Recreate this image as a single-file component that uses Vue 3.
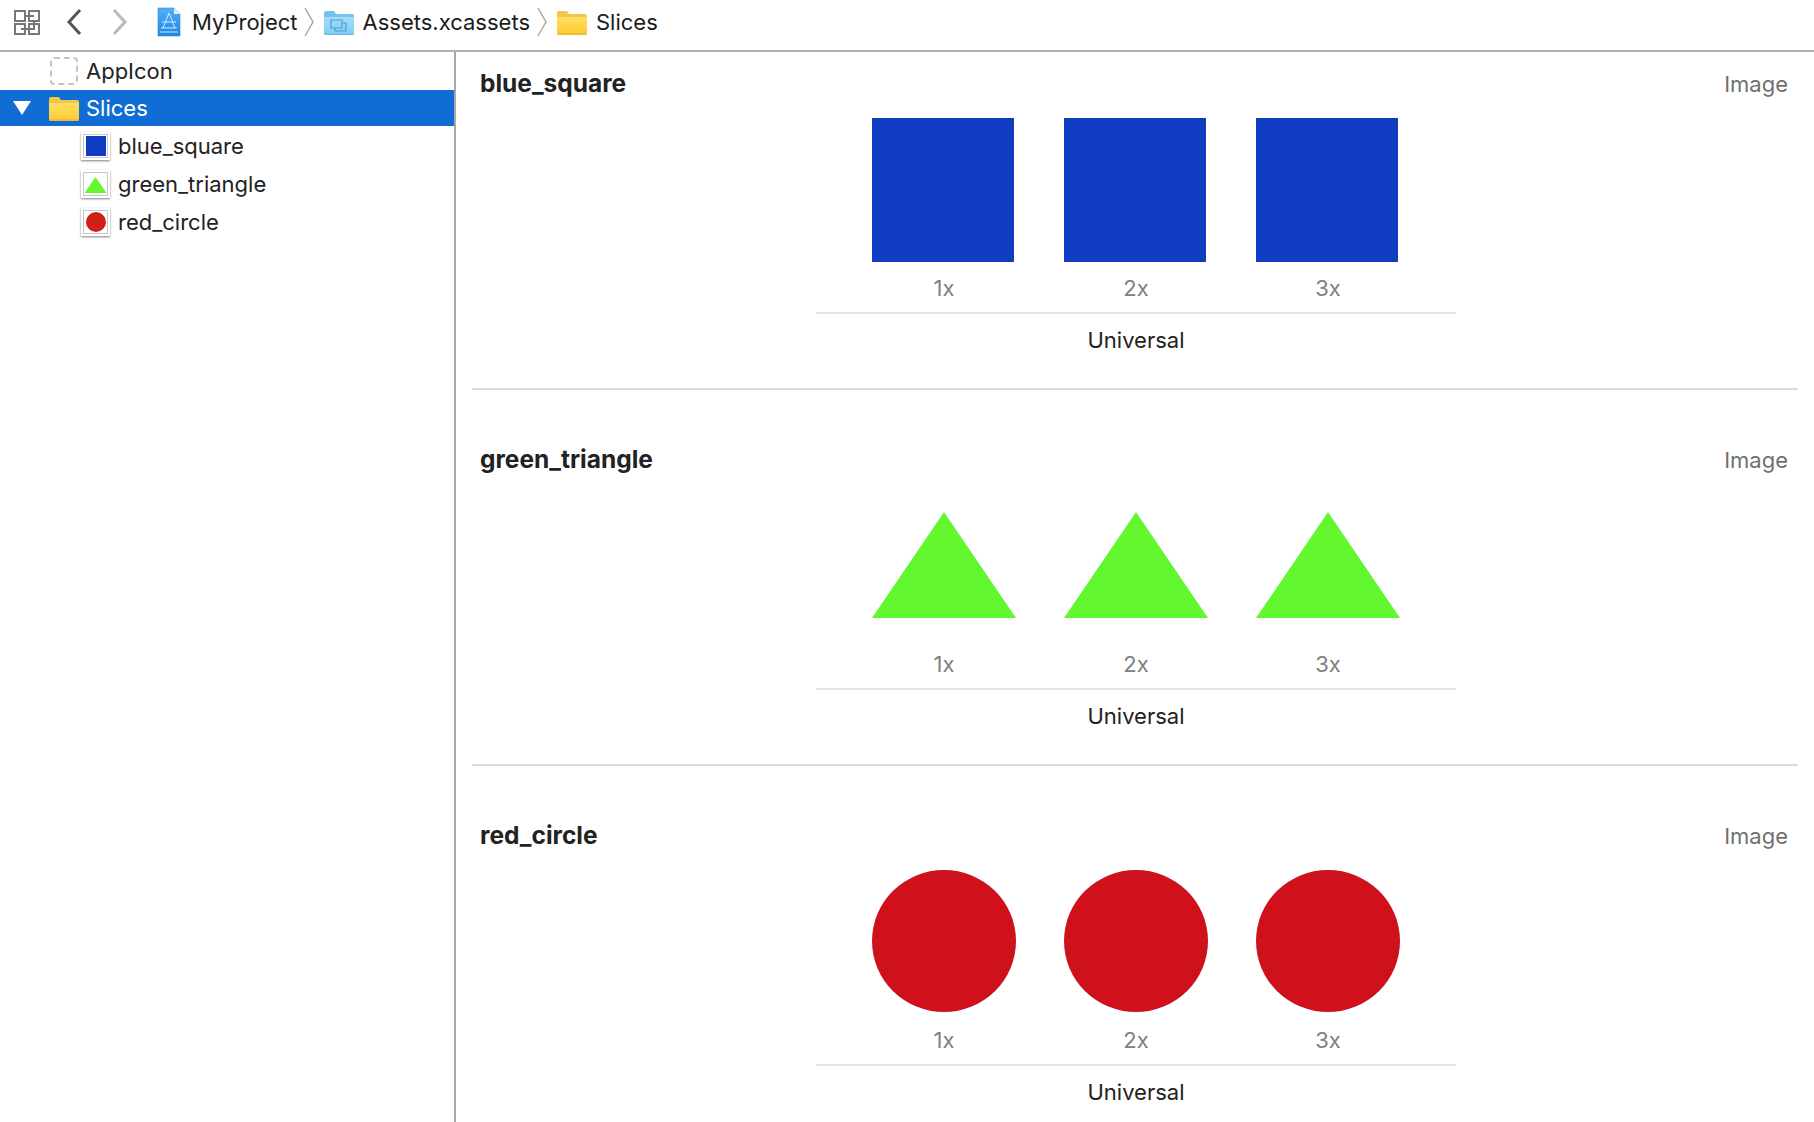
<template>
  <div class="app">
    <header class="toolbar">
      <svg class="grid-icon" width="28" height="28" viewBox="0 0 28 28" fill="none" stroke="#777" stroke-width="2">
        <path d="M2 3h10v10H2zM16 3h10v10H16zM2 16h10v10H2zM16 16h10v10H16zM12 8h9M8 21h13V13" />
      </svg>
      <svg class="nav-back" width="16" height="28" viewBox="0 0 16 28" fill="none" stroke="#555" stroke-width="3">
        <path d="M14 2 3 14l11 12" />
      </svg>
      <svg class="nav-forward" width="16" height="28" viewBox="0 0 16 28" fill="none" stroke="#b9b9b9" stroke-width="3">
        <path d="M2 2l11 12L2 26" />
      </svg>

      <svg class="doc-icon" width="24" height="30" viewBox="0 0 24 30">
        <defs>
          <linearGradient id="docFill" x1="0" y1="0" x2="0" y2="1">
            <stop offset="0" stop-color="#4fb0f7" />
            <stop offset="1" stop-color="#1f84ea" />
          </linearGradient>
        </defs>
        <path d="M1 1h16l6 6v22H1z" fill="url(#docFill)" stroke="#2a86d8" stroke-width="0.6" />
        <path d="M17 1l6 6h-6z" fill="#e4f1fb" />
        <path d="M12 6 6 21M12 6l6 15M5 15h14M4 21h16M3 25h18" fill="none" stroke="#d5ebfb" stroke-width="1" />
      </svg>
      <span class="crumb">MyProject</span>
      <svg class="crumb-sep" width="12" height="30" viewBox="0 0 12 30" fill="none" stroke="#a9a9a9" stroke-width="1.5">
        <path d="M2 1l8 14-8 14" />
      </svg>
      <svg class="crumb-folder" width="30" height="25" viewBox="0 0 30 25">
        <defs>
          <linearGradient id="blueFolder" x1="0" y1="0" x2="0" y2="1">
            <stop offset="0" stop-color="#a3dcf9" />
            <stop offset="1" stop-color="#7fcdf5" />
          </linearGradient>
        </defs>
        <path d="M0 3a2 2 0 0 1 2-2h8l2 3h16a2 2 0 0 1 2 2v17a2 2 0 0 1-2 2H2a2 2 0 0 1-2-2z" fill="#74c3ee" />
        <path d="M0 7h30v16a2 2 0 0 1-2 2H2a2 2 0 0 1-2-2z" fill="url(#blueFolder)" />
        <path d="M0 24h30" stroke="#62b4e4" stroke-width="1" />
        <path d="M7 10h11v8H7zM18 13h4v8H11v-3" fill="none" stroke="#4a9fd6" stroke-width="1.2" />
      </svg>
      <span class="crumb">Assets.xcassets</span>
      <svg class="crumb-sep crumb-sep-last" width="12" height="30" viewBox="0 0 12 30" fill="none" stroke="#a9a9a9" stroke-width="1.5">
        <path d="M2 1l8 14-8 14" />
      </svg>
      <svg class="crumb-folder" width="30" height="25" viewBox="0 0 30 25">
        <defs>
          <linearGradient id="yellowFolder" x1="0" y1="0" x2="0" y2="1">
            <stop offset="0" stop-color="#ffdf62" />
            <stop offset="1" stop-color="#fdca30" />
          </linearGradient>
        </defs>
        <path d="M0 3a2 2 0 0 1 2-2h8l2 3h16a2 2 0 0 1 2 2v17a2 2 0 0 1-2 2H2a2 2 0 0 1-2-2z" fill="#f3c645" />
        <path d="M0 7h30v16a2 2 0 0 1-2 2H2a2 2 0 0 1-2-2z" fill="url(#yellowFolder)" />
        <path d="M0 24h30" stroke="#e2ad2b" stroke-width="1" />
      </svg>
      <span class="crumb">Slices</span>
    </header>

    <div class="body">
      <aside class="sidebar">
        <div class="row">
          <span class="app-icon"></span>
          <span>AppIcon</span>
        </div>
        <div class="row row-selected">
          <svg class="disclosure" width="18" height="14" viewBox="0 0 18 14">
            <path d="M0 0h18L9 14z" fill="#fff" />
          </svg>
          <svg width="30" height="25" viewBox="0 0 30 25">
            <path d="M0 3a2 2 0 0 1 2-2h8l2 3h16a2 2 0 0 1 2 2v17a2 2 0 0 1-2 2H2a2 2 0 0 1-2-2z" fill="#f3c645" />
            <path d="M0 7h30v16a2 2 0 0 1-2 2H2a2 2 0 0 1-2-2z" fill="url(#yellowFolder)" />
            <path d="M0 24h30" stroke="#e2ad2b" stroke-width="1" />
          </svg>
          <span>Slices</span>
        </div>
        <div v-for="item in slices" :key="item.name" class="row row-child">
          <span class="thumb">
            <span class="thumb-frame">
              <span v-if="item.shape === 'square'" class="thumb-square"></span>
              <span v-else-if="item.shape === 'triangle'" class="thumb-triangle"></span>
              <span v-else class="thumb-circle"></span>
            </span>
          </span>
          <span>{{ item.name }}</span>
        </div>
      </aside>

      <main class="main">
        <section v-for="item in slices" :key="item.name" class="set">
          <div class="set-head">
            <h3>{{ item.name }}</h3>
            <span class="set-kind">Image</span>
          </div>
          <div class="set-images">
            <div v-for="scale in scales" :key="scale" class="slot">
              <div :class="['picture', item.shape]"></div>
              <div class="scale">{{ scale }}</div>
            </div>
          </div>
          <div class="set-footer">Universal</div>
        </section>
      </main>
    </div>
  </div>
</template>

<script setup>
const scales = ['1x', '2x', '3x']

const slices = [
  { name: 'blue_square', shape: 'square' },
  { name: 'green_triangle', shape: 'triangle' },
  { name: 'red_circle', shape: 'circle' },
]
</script>

<style>
html,
body {
  margin: 0;
  background: #fff;
}
</style>

<style scoped>
.app {
  width: 1814px;
  height: 1122px;
  overflow: hidden;
  display: flex;
  flex-direction: column;
  background: #fff;
  color: #222;
  font-family: Inter, 'Liberation Sans', sans-serif;
  font-size: 22px;
}

.toolbar {
  height: 52px;
  flex: none;
  display: flex;
  align-items: center;
  box-sizing: border-box;
  padding: 0 0 6px 13px;
  border-bottom: 2px solid #b0b0b0;
}
.nav-back {
  margin-left: 25px;
}
.nav-forward {
  margin-left: 30px;
}
.doc-icon {
  margin-left: 29px;
  margin-right: 2px;
}
.crumb {
  margin-left: 9px;
  color: #1c1c1c;
  white-space: nowrap;
}
.crumb-sep {
  margin-left: 5px;
}
.crumb-sep-last {
  margin-left: 6px;
}
.crumb-folder {
  margin-left: 9px;
}

.body {
  flex: 1;
  display: flex;
  min-height: 0;
}

.sidebar {
  width: 456px;
  flex: none;
  box-sizing: border-box;
  border-right: 2px solid #a8a8a8;
}
.row {
  height: 38px;
  display: flex;
  align-items: center;
  gap: 8px;
  padding-left: 50px;
  white-space: nowrap;
}
.row-selected {
  height: 36px;
  margin-bottom: 1px;
  padding-left: 13px;
  gap: 7px;
  background: #116cd6;
  color: #fff;
}
.disclosure {
  margin-right: 11px;
}
.row-child {
  padding-left: 81px;
}
.app-icon {
  width: 24px;
  height: 24px;
  border: 2px dashed #c4c4c4;
  border-radius: 4px;
}
.thumb {
  width: 29px;
  height: 28px;
  flex: none;
  box-sizing: border-box;
  padding: 2px;
  background: #fff;
  box-shadow: 0 1px 2px rgba(0, 0, 0, 0.5);
}
.thumb-frame {
  display: flex;
  align-items: center;
  justify-content: center;
  height: 100%;
  box-sizing: border-box;
  border: 1px solid #c8c8c8;
}
.thumb-square {
  width: 20px;
  height: 20px;
  background: #0f3cc0;
}
.thumb-triangle {
  width: 22px;
  height: 16px;
  margin-top: 2px;
  background: #63f72f;
  clip-path: polygon(50% 0, 100% 100%, 0 100%);
}
.thumb-circle {
  width: 20px;
  height: 20px;
  border-radius: 50%;
  background: #ce1f1a;
}

.main {
  flex: 1;
  min-width: 0;
  padding: 0 16px;
}
.set {
  height: 338px;
  box-sizing: border-box;
  padding-top: 19px;
  border-bottom: 2px solid #d9d9d9;
}
.set + .set {
  margin-top: 38px;
}
.set-head {
  display: flex;
  justify-content: space-between;
  align-items: center;
  height: 24px;
  padding: 0 10px 0 8px;
}
.set-head h3 {
  margin: 0;
  font-size: 24.5px;
  font-weight: 700;
  color: #222;
}
.set-kind {
  margin-top: 2px;
  color: #707070;
}
.set-images {
  width: 640px;
  margin: 23px 0 0 344px;
  display: flex;
  justify-content: center;
  padding-bottom: 12px;
  border-bottom: 2px solid #e4e4e4;
}
.slot {
  width: 192px;
}
.picture {
  width: 144px;
  height: 144px;
  margin: 0 0 14px 24px;
}
.picture.square {
  width: 142px;
  background: #0f3cc0;
}
.picture.triangle {
  height: 106px;
  margin-top: 18px;
  margin-bottom: 34px;
  background: #63f72f;
  clip-path: polygon(50% 0, 100% 100%, 0 100%);
}
.picture.circle {
  height: 142px;
  margin-bottom: 16px;
  border-radius: 50%;
  background: #ce111b;
}
.scale {
  height: 24px;
  line-height: 24px;
  text-align: center;
  color: #808080;
}
.set-footer {
  margin-top: 14px;
  margin-left: 344px;
  width: 640px;
  line-height: 24px;
  text-align: center;
  color: #222;
}
</style>
